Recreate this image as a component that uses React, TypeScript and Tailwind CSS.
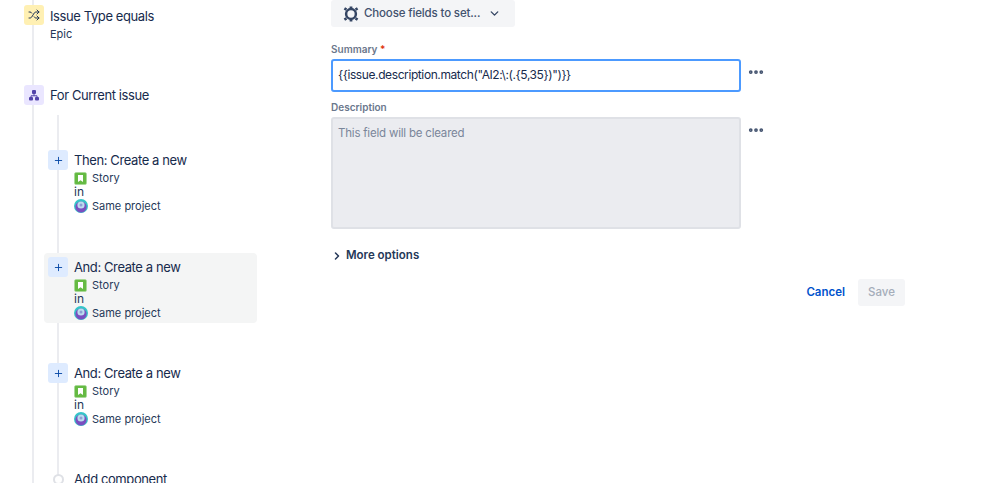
import { ChevronDown, ChevronRight, MoreHorizontal, Plus, Shuffle } from 'lucide-react';
import clsx from 'clsx';

function GearIcon() {
  return (
    <svg width="16" height="16" viewBox="0 0 16 16" className="shrink-0">
      <circle cx="8" cy="8" r="4.9" fill="none" stroke="#344563" strokeWidth="2.5" />
      <path d="M6.6 0.4h2.8v2.4H6.6zM6.6 13.2h2.8v2.4H6.6zM0.7 3.6l1.4-2.4 2.1 1.2-1.4 2.4zM11.8 2.4l2.1-1.2 1.4 2.4-2.1 1.2zM0.7 12.4l2.1-1.2 1.4 2.4-2.1 1.2zM11.8 13.6l1.4-2.4 2.1 1.2-1.4 2.4z" fill="#344563" />
    </svg>
  );
}

function StoryIcon() {
  return (
    <svg width="13" height="13" viewBox="0 0 13 13" className="shrink-0">
      <rect x="0.5" y="0.5" width="12" height="12" rx="1.5" fill="#65ba43" stroke="#a5d994" strokeWidth="0.6" />
      <path d="M4 3h5v7L6.5 8.2 4 10z" fill="#fff" />
    </svg>
  );
}

function ProjectIcon() {
  return (
    <svg width="14" height="14" viewBox="0 0 14 14" className="shrink-0">
      <circle cx="7" cy="7" r="7" fill="#35c4c8" />
      <circle cx="7" cy="8" r="5.6" fill="#7a4fc0" />
      <circle cx="7" cy="6" r="3.6" fill="#bcdcef" />
      <circle cx="7" cy="6" r="1.5" fill="#8d9fd6" />
    </svg>
  );
}

function HierarchyIcon() {
  return (
    <svg width="12" height="12" viewBox="0 0 12 12" className="shrink-0">
      <rect x="4" y="1" width="4" height="4" rx="1" fill="#5243aa" />
      <rect x="1" y="8" width="4" height="3.5" rx="1" fill="#5243aa" />
      <rect x="7" y="8" width="4" height="3.5" rx="1" fill="#5243aa" />
      <path d="M6 5v2M3 8V6.8h6V8" stroke="#5243aa" strokeWidth="1" fill="none" />
    </svg>
  );
}

function CreateStep({ title, highlighted, className }: { title: string; highlighted?: boolean; className: string }) {
  return (
    <div className={clsx('relative w-[213px] h-[70px] rounded-[4px] pl-1 pt-1 flex gap-[6px]', highlighted && 'bg-[#f4f5f5]', className)}>
      <div className="w-5 h-5 rounded-[3px] bg-[#deebff] flex items-center justify-center shrink-0">
        <Plus size={11} strokeWidth={2} className="text-[#0747a6]" />
      </div>
      <div className="text-[11px] leading-[14px] text-[#253858]">
        <div className="text-[13px] tracking-[-0.4px] leading-[21px] text-[#172b4d]">{title}</div>
        <div className="flex items-center gap-[5px] h-[14px]">
          <StoryIcon />
          <span>Story</span>
        </div>
        <div className="text-[12px]">in</div>
        <div className="flex items-center gap-[4px] h-[14px]">
          <ProjectIcon />
          <span>Same project</span>
        </div>
      </div>
    </div>
  );
}

export default function App() {
  return (
    <div className="w-[999px] h-[483px] overflow-hidden bg-white flex font-['Inter',sans-serif] text-[#172b4d]">
      {/* Rule tree */}
      <aside className="relative w-[331px] shrink-0 pl-6 pt-[5px]">
        <div className="absolute left-[32px] top-0 bottom-0 w-[2px] bg-[#ebecf0]" />
        <div className="absolute left-[57px] top-[115px] h-[360px] w-[2px] bg-[#ebecf0]" />

        <div className="relative flex gap-[6px]">
          <div className="w-5 h-5 rounded-[3px] bg-[#fff0b3] flex items-center justify-center">
            <Shuffle size={12} strokeWidth={2} className="text-[#253858]" />
          </div>
          <div>
            <div className="text-[13px] tracking-[-0.4px] leading-[22px]">Issue Type equals</div>
            <div className="text-[11px] leading-[14px] text-[#253858]">Epic</div>
          </div>
        </div>

        <div className="relative flex gap-[6px] mt-[43px] items-center">
          <div className="w-5 h-5 rounded-[3px] bg-[#eae6ff] flex items-center justify-center">
            <HierarchyIcon />
          </div>
          <div className="text-[13px] tracking-[-0.4px] leading-[22px]">For Current issue</div>
        </div>

        <CreateStep title="Then: Create a new" className="ml-5 mt-[40px]" />
        <CreateStep title="And: Create a new" highlighted className="ml-5 mt-[37px]" />
        <CreateStep title="And: Create a new" className="ml-5 mt-[36px]" />

        <div className="relative ml-[29px] mt-[43px] flex items-center gap-[10px]">
          <div className="w-[11px] h-[11px] rounded-full border-2 border-[#dfe1e6] bg-white" />
          <span className="text-[13px] tracking-[-0.4px] leading-[14px]">Add component</span>
        </div>
      </aside>

      {/* Field editor */}
      <main className="flex-1">
        <button className="w-[184px] h-[27px] rounded-[3px] bg-[#f4f5f7] flex items-center pl-3 text-[#42526e]">
          <GearIcon />
          <span className="ml-[5px] text-[11.5px] tracking-[-0.15px] font-medium">Choose fields to set...</span>
          <ChevronDown size={13} strokeWidth={2.5} className="ml-[8px] text-[#344563]" />
        </button>

        <label className="block mt-[15px] h-[17px] text-[10px] leading-[14px] font-semibold text-[#6b778c]">
          Summary <span className="text-[#de350b]">*</span>
        </label>
        <div className="flex gap-[6px]">
          <div className="w-[410px] h-[33px] rounded-[3px] border-2 border-[#4c9aff] flex items-center pl-[5px] pb-[1px] text-[12px] tracking-[-0.4px]">
            {'{{issue.description.match("AI2:\\:(.{5,35})")}}'}
          </div>
          <MoreHorizontal size={18} strokeWidth={3} className="mt-[4px] text-[#42526e]" />
        </div>

        <label className="block mt-[8px] h-[17px] text-[10px] leading-[14px] font-semibold text-[#6b778c]">Description</label>
        <div className="flex gap-[6px]">
          <div className="w-[410px] h-[112px] rounded-[3px] border-2 border-[#dfe1e6] bg-[#ebecf0] pl-[5px] pt-[5px] text-[11.5px] tracking-[-0.2px] leading-[18px] text-[#7a869a]">
            This field will be cleared
          </div>
          <MoreHorizontal size={18} strokeWidth={3} className="mt-[4px] text-[#42526e]" />
        </div>

        <div className="mt-[19px] flex items-center gap-[3px] h-4 text-[11.5px] font-semibold text-[#253858]">
          <ChevronRight size={12} strokeWidth={3} />
          <span>More options</span>
        </div>

        <div className="w-[574px] mt-[15px] flex justify-end items-center gap-[13px] text-[11.5px] font-medium">
          <span className="text-[#0052cc] font-semibold">Cancel</span>
          <button className="w-[47px] h-[27px] rounded-[3px] bg-[#f4f5f7] text-[#a5adba]">Save</button>
        </div>
      </main>
    </div>
  );
}
